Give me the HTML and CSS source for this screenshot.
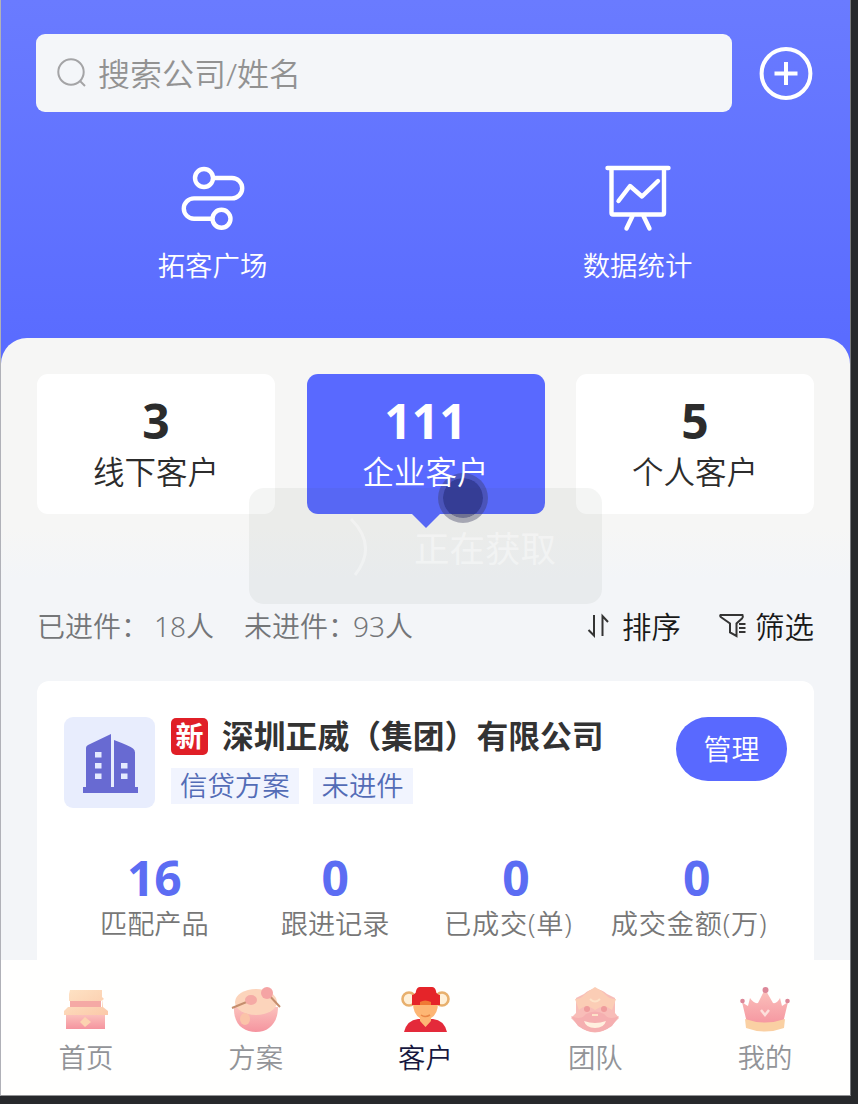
FILE: index.html
```html
<!DOCTYPE html>
<html lang="zh-CN">
<head>
<meta charset="utf-8">
<title>客户</title>
<link rel="stylesheet" href="styles.css">
</head>
<body>
<div class="phone">
  <header class="header">
    <div class="search-row">
      <div class="search">
        <svg class="search-icon" viewBox="0 0 32 32"><circle cx="15" cy="15" r="12.7"/><path d="M24 24l5 5"/></svg>
        <span>搜索公司/姓名</span>
      </div>
      <svg class="add" viewBox="0 0 54 54"><circle cx="27" cy="27.500" r="24.4"/><path d="M27 16v23M15.500 27.500h23"/></svg>
    </div>
    <nav class="shortcuts">
      <div class="shortcut">
        <svg viewBox="0 0 70 70"><circle cx="26" cy="15" r="9"/><path d="M35.500 15H54a10.200 10.200 0 0 1 0 20.400H16a10.200 10.200 0 0 0 0 20.400h18"/><circle cx="43.500" cy="55.800" r="9"/></svg>
        <span>拓客广场</span>
      </div>
      <div class="shortcut">
        <svg viewBox="0 0 70 70"><path d="M4.500 5h61M8.500 5v45q0 1.500 1.500 1.500h49.500q1.500 0 1.500-1.500V5M30 52l-6.500 13.500M40 52l6.500 13.500M15.500 38l11.500-15 12 10.500 16-15.500"/></svg>
        <span>数据统计</span>
      </div>
    </nav>
  </header>

  <main class="panel">
    <section class="totals">
      <div class="total"><b>3</b><span>线下客户</span></div>
      <div class="total active"><b>111</b><span>企业客户</span></div>
      <div class="total"><b>5</b><span>个人客户</span></div>
    </section>

    <section class="meta">
      <span class="done">已进件：</span><span class="done-count">18人</span>
      <span class="pending">未进件：</span><span>93人</span>
      <div class="actions">
        <div class="action">
          <svg class="sort-icon" viewBox="0 0 24 28"><path d="M8 4v20.500L2.500 19M16.500 25V5l5.500 6"/></svg>
          <span>排序</span>
        </div>
        <div class="action">
          <svg class="filter-icon" viewBox="0 0 30 28"><path d="M2.500 4h22q1 2-.5 3.500l-5.500 5V25l-6.500-3.500v-9l-8.500-6q-2-1.500-1-2.500zM21 13h6.500M21 17h6.500M21 21h6.500"/></svg>
          <span>筛选</span>
        </div>
      </div>
    </section>

    <article class="company">
      <div class="company-head">
        <div class="avatar">
          <svg viewBox="0 0 56 60"><path d="M4 14q0-2 2-3L29 0v54H4zM32 6q16 6 19 8.500 2 1.500 2 4V54H32z"/><path d="M1 53h55v6H1z"/><path class="pane" d="M13 18h6.500v5.500H13zM13 29h6.500v5.500H13zM13 39.500h6.500V45H13zM39 29h6.500v5.500H39zM39 39.500h6.500V45H39z"/></svg>
        </div>
        <div class="company-info">
          <div class="company-title"><i>新</i><h2>深圳正威（集团）有限公司</h2></div>
          <div class="tags"><span>信贷方案</span><span>未进件</span></div>
        </div>
        <button class="manage">管理</button>
      </div>
      <div class="stats">
        <div><b>16</b><span>匹配产品</span></div>
        <div><b>0</b><span>跟进记录</span></div>
        <div><b>0</b><span class="with-unit">已成交(单)</span></div>
        <div><b>0</b><span class="with-unit">成交金额(万)</span></div>
      </div>
    </article>
  </main>

  <footer class="tabs">
    <div class="tab">
      <svg viewBox="0 0 50 48">
        <defs>
          <linearGradient id="cream" x1="0" y1="0" x2="1" y2="1"><stop offset="0" stop-color="#fee3c5"/><stop offset="1" stop-color="#fbc9a9"/></linearGradient>
          <linearGradient id="rose" x1="0" y1="0" x2="0" y2="1"><stop offset="0" stop-color="#fbc3bd"/><stop offset="1" stop-color="#f5949f"/></linearGradient>
        </defs>
        <path fill="#f5a9a5" d="M9 14h31v9H9z"/><path fill="url(#rose)" d="M5 29h39v15H5z"/>
        <path fill="url(#cream)" d="M9 5h32v7l2 2-3 2H8V9zM7 22h34V13l1 9 5 4v4H3v-4z"/>
        <path fill="#fcd3b0" d="M24 32l6 5-6 5-5-5z"/>
      </svg>
      <span>首页</span>
    </div>
    <div class="tab">
      <svg viewBox="0 0 50 48">
        <path fill="url(#rose)" d="M3 21c-1 18 9 26 22 26s22-9 22-25z"/>
        <ellipse cx="25" cy="17" rx="21" ry="13" fill="#fcd4bb"/>
        <path d="M1 23l17-7M36 8l13 14" stroke="#c58e6d" stroke-width="2" fill="none"/>
        <ellipse cx="20" cy="15" rx="6" ry="5" fill="#f5aaa5"/><ellipse cx="36" cy="8" rx="6" ry="6" fill="#f5a4a4"/>
        <ellipse cx="14" cy="34" rx="5" ry="6" fill="#fbc3a8"/>
      </svg>
      <span>方案</span>
    </div>
    <div class="tab current">
      <svg viewBox="0 0 50 48">
        <circle cx="9" cy="14" r="6.500" fill="#fff0d8" stroke="#e8b06d" stroke-width="2.600"/><circle cx="42" cy="14" r="6.500" fill="#fff0d8" stroke="#e8b06d" stroke-width="2.600"/>
        <path fill="#e42a3a" d="M4 47q3-12 14-13h15q11 1 14 13z"/>
        <path fill="#fdb674" d="M13 18h25q0 11-7 15v3l-5.500 6L20 36v-3q-7-4-7-15z"/>
        <path fill="#e52429" d="M12 20V10q4-1 4-4 1-4 4-4h12q3 0 4 4 0 3 4 4v10z"/>
        <path fill="#f07935" d="M20 17q5-3 11 0v3H20z"/>
        <path d="M21 30q4 3 9 0" fill="none" stroke="#e98545" stroke-width="1.500"/>
      </svg>
      <span>客户</span>
    </div>
    <div class="tab">
      <svg viewBox="0 0 50 48">
        <path fill="#f8bdb8" d="M6 13l8-4q11-10 23 0l8 4v15l4 5-8 8q-16 13-32 0l-8-8 5-5z"/>
        <path fill="#fbcdb5" d="M5 14q6 0 9-4Q20 5 25 2q6 3 11 8 3 4 10 4l-4 11q-8-7-17 0-9-7-16 0z"/>
        <circle cx="17" cy="24" r="3" fill="#ef9c9c"/><circle cx="34" cy="24" r="3" fill="#ef9c9c"/>
        <path fill="#f5afb0" d="M1 31q10 5 15-2 9-5 18 0 5 7 15 2l-7 10q-17 12-34 0z"/>
        <path fill="#fff0df" d="M14 36q11 4 22 0-2 7-11 7-9 0-11-7z"/>
        <path d="M20 14q5 5 10 0M22 30h6" fill="none" stroke="#fde2c8" stroke-width="2"/>
      </svg>
      <span>团队</span>
    </div>
    <div class="tab">
      <svg viewBox="0 0 50 48">
        <path fill="url(#rose)" d="M2 17q4 3 6 4l2-8q4 6 8 5l7-14 8 14q4 1 7-5l2 8 6-4-5 21q-18 6-36 0z"/>
        <path fill="#fad0a3" d="M5 34q20 7 40 0l-1 9q-19 7-38 0z"/>
        <circle cx="2.500" cy="16" r="2.300" fill="#dc8798"/><circle cx="25.500" cy="5" r="3" fill="#dc8798"/><circle cx="47.500" cy="16" r="2.300" fill="#dc8798"/>
        <path d="M21 25l4 5 4-5" fill="none" stroke="#fde0dc" stroke-width="2.500"/>
      </svg>
      <span>我的</span>
    </div>
  </footer>

  <div class="toast">
    <svg viewBox="0 0 74 74"><path d="M52 10q27 27 4 56"/></svg>
    <span>正在获取</span>
  </div>
  <div class="touch"></div>
</div>
</body>
</html>
```
FILE: styles.css
```css
* { box-sizing: border-box; }

body {
  margin: 0;
  height: 1104px;
  overflow: hidden;
  background: #27292c;
  font-family: "Noto Sans", "Noto Sans CJK SC", sans-serif;
  font-weight: 350;
}

svg { display: block; flex: none; }

.phone {
  position: relative;
  display: flex;
  flex-direction: column;
  width: 851px;
  height: 1096px;
  border-left: 1px solid #b0b1b8;
  border-right: 1px solid #77797d;
  border-bottom: 1px solid #939496;
  background: linear-gradient(#6a7bff, #5a6cff 338px);
}

.header { height: 338px; flex: none; padding: 34px 37px 0 35px; }

.search-row { display: flex; align-items: center; justify-content: space-between; }

.search {
  display: flex;
  align-items: center;
  gap: 10px;
  width: 696px;
  height: 78px;
  padding-left: 20px;
  border-radius: 9px;
  background: #f4f6f9;
  color: #929292;
  font-size: 32px;
  line-height: 44px;
}
.search span { padding-top: 2px; }

.search-icon { width: 32px; height: 32px; fill: none; stroke: #a4a4a6; stroke-width: 2; }

.add { width: 54px; height: 54px; fill: none; stroke: #fff; stroke-width: 4; }

.shortcuts { display: flex; margin: 51px -37px 0 -36px; }

.shortcut {
  display: flex;
  flex: 1;
  flex-direction: column;
  align-items: center;
  color: #fff;
  font-size: 27.400px;
  line-height: 40px;
}
.shortcut svg { width: 70px; height: 70px; fill: none; stroke: #fff; stroke-width: 4.400; stroke-linecap: round; stroke-linejoin: round; }
.shortcut span { margin-top: 13px; }

.panel {
  flex: 1;
  min-height: 0;
  padding: 36px 36px 0;
  overflow: hidden;
  border-radius: 26px 26px 0 0;
  background: linear-gradient(#f6f6f5 0, #f6f6f5 190px, #f3f5f8 240px);
}

.totals { display: grid; grid-template-columns: repeat(3, 238px); justify-content: space-between; }

.total {
  position: relative;
  display: flex;
  flex-direction: column;
  align-items: center;
  height: 140px;
  padding-top: 22px;
  border-radius: 11px;
  background: #fff;
  color: #2c2c2c;
}
.total b { font-size: 48px; line-height: 50px; }
.total span { position: relative; z-index: 2; margin-top: 5px; font-size: 31.500px; line-height: 42px; }
.total.active { background: #5969ff; color: #fff; }
.total.active::after {
  content: "";
  position: absolute;
  top: 139px;
  left: 104px;
  border: 15px solid transparent;
  border-top-color: #5969ff;
  border-bottom: 0;
}

.meta {
  display: flex;
  align-items: center;
  height: 40px;
  margin-top: 91px;
  color: #747678;
  font-size: 28px;
  white-space: nowrap;
}
.done { width: 117px; }
.done-count { width: 90px; }
.pending { width: 109px; }

.actions { display: flex; gap: 37px; margin-left: auto; color: #191919; font-size: 29.500px; }
.action { display: flex; align-items: center; }
.action svg { fill: none; stroke: #343434; stroke-width: 2; }
.sort-icon { width: 24px; height: 28px; margin-right: 12px; }
.filter-icon { width: 30px; height: 28px; margin-right: 7px; }

.company {
  height: 290px;
  margin-top: 36px;
  padding: 36px 27px 0;
  border-radius: 12px;
  background: #fff;
}

.company-head { display: flex; align-items: flex-start; }

.avatar {
  display: flex;
  align-items: center;
  justify-content: center;
  width: 91px;
  height: 91px;
  border-radius: 9px;
  background: #e8edfd;
}
.avatar svg { width: 56px; height: 60px; margin-top: 3px; fill: #686ad2; }
.avatar .pane { fill: #e5eaff; }

.company-info { flex: 1; padding-left: 16px; }

.company-title { display: flex; align-items: center; height: 38px; }
.company-title i {
  width: 37px;
  height: 37px;
  border-radius: 5px;
  background: #e01f27;
  color: #fff;
  font-size: 28px;
  font-style: normal;
  font-weight: 700;
  line-height: 36px;
  text-align: center;
}
.company-title h2 {
  margin: 0 0 0 14px;
  color: #333;
  font-size: 31.800px;
  font-weight: 700;
  line-height: 38px;
  white-space: nowrap;
}

.tags { display: flex; gap: 14px; margin-top: 13px; }
.tags span {
  height: 36px;
  padding: 0 9px;
  background: #f1f4fe;
  color: #536cb6;
  font-size: 27.400px;
  line-height: 36px;
}

.manage {
  width: 111px;
  height: 64px;
  padding: 0;
  border: 0;
  border-radius: 32px;
  background: #5969ff;
  color: #fff;
  font: 350 28px/64px "Noto Sans", "Noto Sans CJK SC", sans-serif;
}

.stats { display: grid; grid-template-columns: repeat(4, 1fr); margin: 45px 0 0; }
.stats div { display: flex; flex-direction: column; align-items: center; }
.stats b { color: #5c6df3; font-size: 48px; line-height: 50px; }
.stats span { margin-top: 1px; color: #777; font-size: 27.200px; line-height: 40px; white-space: nowrap; }
.stats .with-unit { padding-right: 15px; letter-spacing: 0.8px; }

.tabs { display: flex; flex: none; height: 135px; padding-top: 25px; background: #fffffe; }
.tab {
  display: flex;
  flex: 1;
  flex-direction: column;
  align-items: center;
  color: #929498;
  font-size: 27.400px;
  line-height: 40px;
}
.tab svg { width: 50px; height: 48px; }
.tab span { margin-top: 5px; }
.tab.current { color: #17183f; }

.toast {
  position: absolute;
  top: 488px;
  left: 248px;
  display: flex;
  align-items: center;
  width: 353px;
  height: 116px;
  padding-left: 50px;
  border-radius: 15px;
  background: rgba(70, 80, 75, 0.06);
  color: rgba(255, 255, 255, 0.42);
  font-size: 35.500px;
  font-weight: 400;
}
.toast svg { width: 74px; height: 74px; margin-right: 41px; fill: none; stroke: rgba(255, 255, 255, 0.35); stroke-width: 3; }

.touch {
  position: absolute;
  top: 473px;
  left: 437px;
  width: 50px;
  height: 50px;
  border: 5px solid rgba(55, 55, 90, 0.38);
  border-radius: 50%;
  background: rgba(30, 33, 85, 0.6);
  background-clip: padding-box;
}
```
